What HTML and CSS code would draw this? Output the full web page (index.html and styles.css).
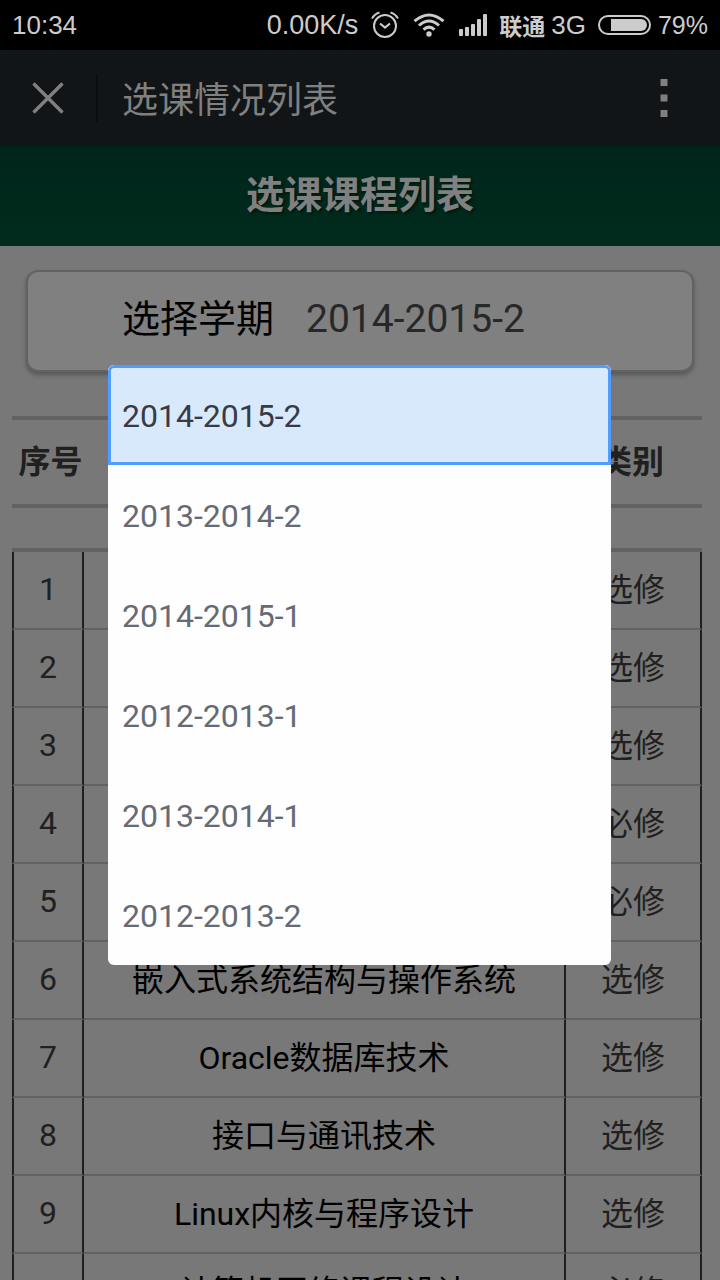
FILE: index.html
```html
<!DOCTYPE html>
<html lang="zh-CN">
<head>
<meta charset="utf-8">
<meta name="viewport" content="width=device-width, initial-scale=1">
<title>选课情况列表</title>
<link rel="stylesheet" href="styles.css">
</head>
<body>
<div class="screen">
  <div class="status-bar">
    <span class="clock">10:34</span>
    <span class="speed">0.00K/s</span>
    <svg class="alarm" width="28" height="28" viewBox="0 0 28 28" fill="none" stroke="#ccc" stroke-width="2" aria-hidden="true">
      <circle cx="14" cy="15" r="11"/>
      <path d="M9 12.500l5 4 5-4" stroke-width="2.200"/>
      <path d="M1 7.500Q3.500 3 8.500 1.500M27 7.500Q24.500 3 19.500 1.500"/>
    </svg>
    <svg class="wifi" width="32" height="24" viewBox="0 0 32 24" fill="none" stroke="#ccc" stroke-width="3" aria-hidden="true">
      <path d="M1.500 8.200Q16-4.200 30.500 8.200M6 12.500Q16 3.500 26 12.500M10.500 16.700Q16 11.500 21.500 16.700"/>
      <circle cx="16" cy="21" r="2.700" fill="#ccc" stroke="none"/>
    </svg>
    <svg class="signal" width="28" height="22" viewBox="0 0 28 22" fill="#ccc" aria-hidden="true">
      <rect x="0" y="15" width="4" height="7" rx="1"/><rect x="6" y="13" width="4" height="9" rx="1"/><rect x="12" y="10" width="4" height="12" rx="1"/><rect x="18" y="5" width="4" height="17" rx="1"/><rect x="24" y="0" width="4" height="22" rx="1"/>
    </svg>
    <span class="carrier">联通</span>
    <span class="network">3G</span>
    <svg class="battery" width="53" height="20" viewBox="0 0 53 20" aria-hidden="true">
      <rect x="1" y="1" width="51" height="18" rx="9" fill="none" stroke="#ccc" stroke-width="2"/>
      <path d="M13 4H43a6 6 0 0 1 0 12H13z" fill="#ccc"/>
    </svg>
    <span class="percent">79%</span>
  </div>

  <div class="nav-bar">
    <button class="close" type="button" aria-label="关闭">
      <svg width="32" height="32" viewBox="0 0 32 32" fill="none" stroke="#808080" stroke-width="3.400"><path d="M1.500 1.500l29 29M30.500 1.500l-29 29"/></svg>
    </button>
    <span class="nav-title">选课情况列表</span>
    <button class="more" type="button" aria-label="更多">
      <svg width="8" height="38" viewBox="0 0 8 38" fill="#808080"><path d="M0.500 0h7v7h-7zM0.500 15.500h7v7h-7zM0.500 31h7v7h-7z"/></svg>
    </button>
  </div>

  <h1 class="page-title">选课课程列表</h1>

  <main class="content">
    <div class="picker">
      <div class="term-card">
        <label for="term">选择学期</label>
        <select id="term" class="term-select">
          <option>2014-2015-2</option>
          <option>2013-2014-2</option>
          <option>2014-2015-1</option>
          <option>2012-2013-1</option>
          <option>2013-2014-1</option>
          <option>2012-2013-2</option>
        </select>
      </div>
      <div class="menu" role="listbox" aria-label="选择学期">
        <button class="choice selected" type="button" role="option" aria-selected="true">2014-2015-2</button>
        <button class="choice" type="button" role="option">2013-2014-2</button>
        <button class="choice" type="button" role="option">2014-2015-1</button>
        <button class="choice" type="button" role="option">2012-2013-1</button>
        <button class="choice" type="button" role="option">2013-2014-1</button>
        <button class="choice" type="button" role="option">2012-2013-2</button>
      </div>
    </div>

    <table class="grid head">
      <colgroup><col class="c-no"><col><col class="c-type"></colgroup>
      <tr><th class="no">序号</th><th></th><th class="type">类别</th></tr>
    </table>

    <table class="grid rows">
      <colgroup><col class="c-no"><col><col class="c-type"></colgroup>
      <tr><td class="no">1</td><td></td><td>选修</td></tr>
      <tr><td class="no">2</td><td></td><td>选修</td></tr>
      <tr><td class="no">3</td><td></td><td>选修</td></tr>
      <tr><td class="no">4</td><td></td><td>必修</td></tr>
      <tr><td class="no">5</td><td></td><td>必修</td></tr>
      <tr><td class="no">6</td><td class="course">嵌入式系统结构与操作系统</td><td>选修</td></tr>
      <tr><td class="no">7</td><td class="course">Oracle数据库技术</td><td>选修</td></tr>
      <tr><td class="no">8</td><td class="course">接口与通讯技术</td><td>选修</td></tr>
      <tr><td class="no">9</td><td class="course">Linux内核与程序设计</td><td>选修</td></tr>
      <tr><td class="no">10</td><td class="course">计算机网络课程设计</td><td>必修</td></tr>
    </table>
  </main>
</div>
</body>
</html>
```
FILE: styles.css
```css
* { box-sizing: border-box; }

body {
  margin: 0;
  background: #787878;
  font-family: Roboto, "Noto Sans CJK SC", sans-serif;
  color: #202020;
}

button, select {
  font: inherit;
  border: 0;
  margin: 0;
  padding: 0;
  background: none;
  appearance: none;
}

svg { display: block; flex: none; }

.screen {
  height: 100vh;
  display: flex;
  flex-direction: column;
  overflow: hidden;
}

.status-bar {
  flex: none;
  height: 50px;
  padding: 0 12px;
  display: flex;
  align-items: center;
  background: #000;
  color: #ccc;
  font: 26px/50px "Liberation Sans", "Noto Sans CJK SC", sans-serif;
  white-space: nowrap;
}
.clock { margin-right: auto; }
.speed { font-size: 27px; }
.alarm { margin-left: 13px; }
.wifi { margin-left: 14px; }
.signal { margin-left: 14px; }
.carrier {
  margin: 0 6px 0 12px;
  font-family: "Noto Sans CJK SC", sans-serif;
  font-size: 23px;
  font-weight: 700;
}
.battery { margin: 0 7px 0 12px; }
.percent { font-size: 25px; }

.nav-bar {
  flex: none;
  height: 96px;
  display: flex;
  align-items: center;
  background: #111517;
  color: #808080;
}
.close {
  width: 98px;
  height: 48px;
  padding-left: 32px;
  border-right: 2px solid #0b0d0e;
}
.nav-title { margin-left: 24px; padding-top: 6px; font-size: 36px; line-height: 48px; }
.more { margin: 0 48px 0 auto; padding: 4px; }

.page-title {
  flex: none;
  margin: 0;
  height: 100px;
  background: linear-gradient(#00241a, #002c1d);
  color: #808080;
  font-size: 38px;
  line-height: 98px;
  text-align: center;
  text-shadow: 2px 2px 2px #001a10;
}

.content {
  flex: 1;
  min-height: 0;
  padding: 24px 18px 0 12px;
  background: #787878;
}

.picker { position: relative; margin: 0 8px 0 14px; }
.term-card {
  height: 102px;
  padding: 0 0 4px 94px;
  display: flex;
  align-items: center;
  border: 2px solid #626262;
  border-radius: 12px;
  background: #808080;
  box-shadow: 0 3px 4px #585858;
  font-size: 38px;
  line-height: 48px;
}
.term-card label { color: #000; }
.term-select { margin-left: 32px; color: #282828; font-size: 39px; }

.menu {
  position: absolute;
  z-index: 1;
  top: 95px;
  left: 82px;
  right: 83px;
  display: flex;
  flex-direction: column;
  overflow: hidden;
  border-radius: 6px;
  background: #fefefe;
}
.choice {
  height: 100px;
  padding: 2px 0 0 14px;
  text-align: left;
  font-size: 32px;
  color: #666a75;
}
.choice.selected {
  padding-left: 11px;
  border: 3px solid #519cff;
  border-radius: 6px 6px 0 0;
  background: #d9e9fc;
  color: #383a46;
}

.grid {
  width: 100%;
  table-layout: fixed;
  border-collapse: separate;
  border-spacing: 0;
  border-top: 4px solid #626262;
  font-size: 32px;
  line-height: 40px;
  text-align: center;
}
.grid th, .grid td { padding: 0; white-space: nowrap; }
.c-no { width: 72px; }
.c-type { width: 136px; }

.head { margin-top: 44px; border-bottom: 4px solid #626262; }
.head th { height: 84px; }
.head .no { padding-left: 5px; }
.head .type { padding-right: 4px; }

.rows { margin-top: 40px; }
.rows td {
  height: 78px;
  border-bottom: 2px solid #626262;
  border-right: 2px solid #202020;
}
.rows .no { padding-bottom: 2px; border-left: 2px solid #202020; }
.rows .course { color: #000; }
```
